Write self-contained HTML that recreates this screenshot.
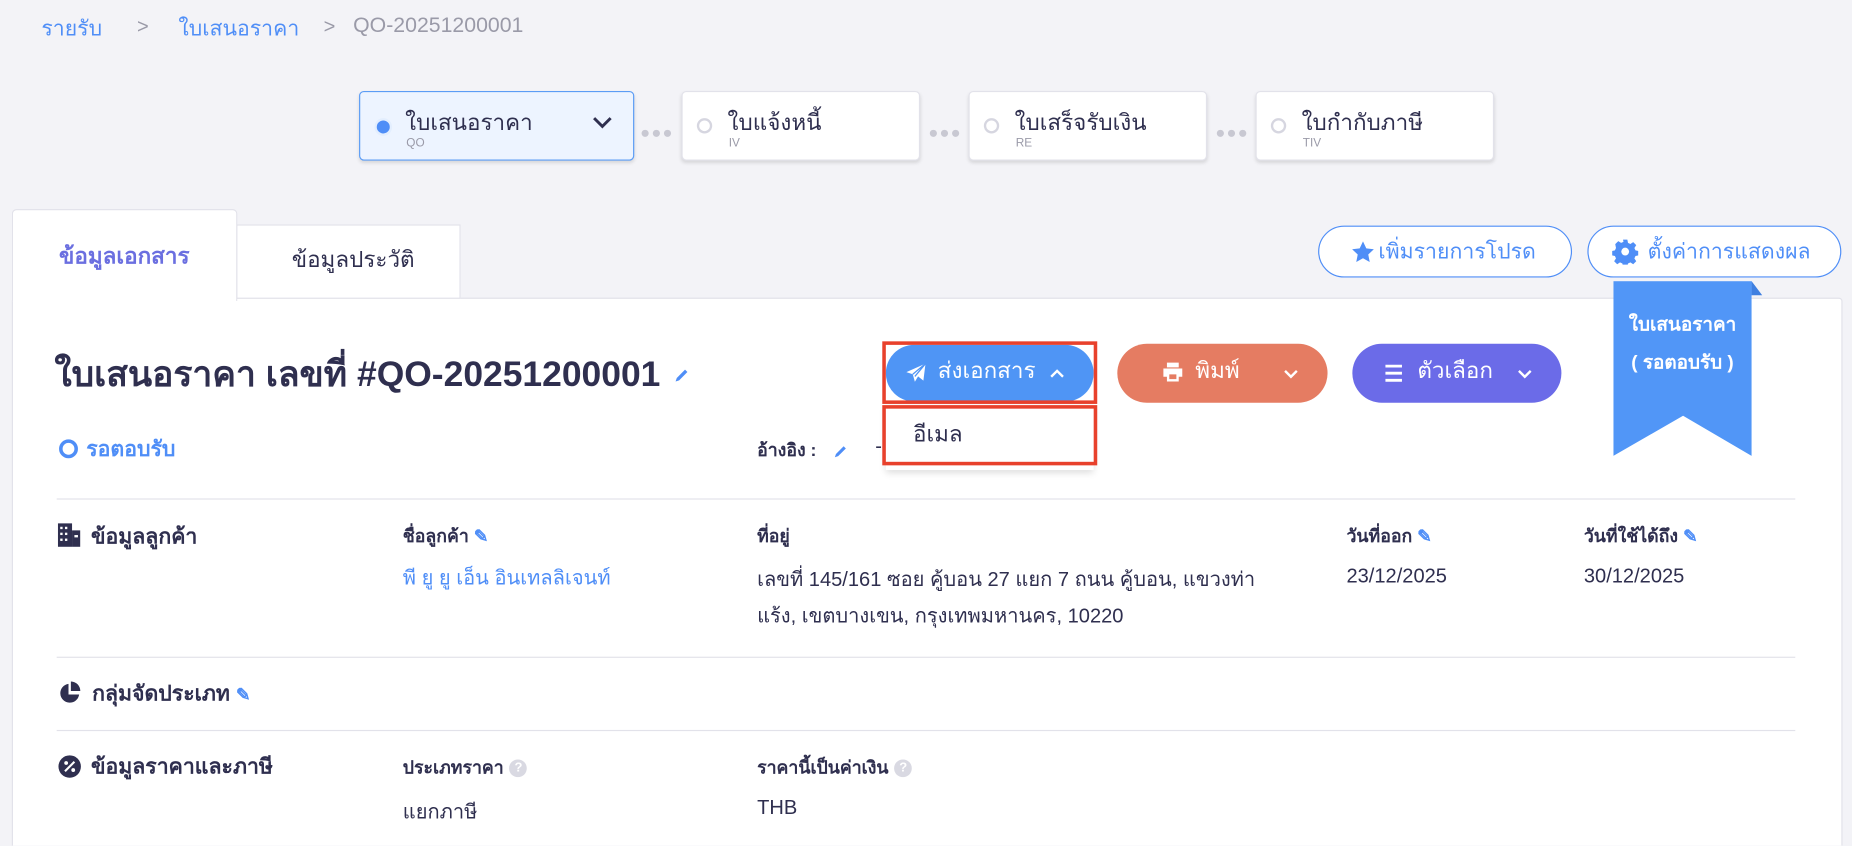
<!DOCTYPE html>
<html><head><meta charset="utf-8"><style>
html,body{margin:0;padding:0;width:1852px;height:846px;overflow:hidden;background:#f3f3f7}
#w{position:absolute;left:0;top:0;width:1568px;height:716px;overflow:hidden;transform:scale(1.1811);transform-origin:0 0;font-family:"Liberation Sans","Noto Sans CJK SC",sans-serif;color:#2f2f4f}
.a{position:absolute;white-space:nowrap}
.blue{color:#4f8ef7}
.card{position:absolute;top:77px;height:59px;background:#fff;border:1px solid #e2e2ea;border-radius:4px;box-shadow:0 2px 3px rgba(0,0,0,.12);box-sizing:border-box}
.card .t{position:absolute;left:38px;top:11px;font-size:19px;color:#2f2f4f}
.card .s{position:absolute;left:39px;top:38px;font-size:10px;color:#9a9aa8}
.card .c{position:absolute;left:12px;top:22px;width:9px;height:9px;border:2.5px solid #d6d6e0;border-radius:50%}
.dots{position:absolute;top:104px;font-size:14px;color:#c8c8d2;letter-spacing:1px}
.pill{position:absolute;border:1px solid #4f8ef7;border-radius:22px;background:#fff;color:#4f8ef7;font-size:18px;box-sizing:border-box;height:44px;line-height:42px;padding-left:50px}
.btn{position:absolute;top:291px;height:50px;border-radius:25px;color:#fff;font-size:19px;line-height:48px}
.lab{font-size:15px;font-weight:bold}
.val{font-size:17px}
.hr{position:absolute;left:48px;width:1472px;height:1px;background:#e2e2ea}
.q{display:inline-block;width:15px;height:15px;border-radius:50%;background:#d9d9e2;color:#fff;font-size:11px;line-height:15px;text-align:center;vertical-align:2px;margin-left:5px}
</style></head><body><div id="w">
<div class="a blue" style="left:35px;top:9px;font-size:18px">รายรับ</div>
<div class="a" style="left:116px;top:13px;font-size:17px;color:#9a9aa8">&gt;</div>
<div class="a blue" style="left:151px;top:9px;font-size:18px">ใบเสนอราคา</div>
<div class="a" style="left:274px;top:13px;font-size:17px;color:#9a9aa8">&gt;</div>
<div class="a" style="left:299px;top:11px;font-size:18px;color:#9a9aa8">QO-20251200001</div>

<div class="card" style="left:304px;width:233px;background:#edf4ff;border-color:#5b9cf5"><div class="c" style="background:#4f8ef7;border-color:#e3eefe;width:11px;height:11px;border-width:2px"></div><div class="t">ใบเสนอราคา</div><div class="s">QO</div>
<svg style="position:absolute;left:196px;top:20px" width="18" height="12" viewBox="0 0 18 12"><path d="M2 2l7 7 7-7" fill="none" stroke="#2f2f4f" stroke-width="2.5"/></svg></div>
<div class="dots" style="left:542px">●●●</div>
<div class="card" style="left:577px;width:202px"><div class="c"></div><div class="t">ใบแจ้งหนี้</div><div class="s">IV</div></div>
<div class="dots" style="left:786px">●●●</div>
<div class="card" style="left:820px;width:202px"><div class="c"></div><div class="t">ใบเสร็จรับเงิน</div><div class="s">RE</div></div>
<div class="dots" style="left:1029px">●●●</div>
<div class="card" style="left:1063px;width:202px"><div class="c"></div><div class="t">ใบกำกับภาษี</div><div class="s">TIV</div></div>

<div class="a" style="left:10px;top:252px;width:1548px;height:466px;background:#fff;border:1px solid #e2e2ea;border-radius:3px"></div>
<div class="a" style="left:200px;top:190px;width:190px;height:63px;background:#fff;border:1px solid #e2e2ea;box-sizing:border-box"></div>
<div class="a" style="left:10px;top:177px;width:191px;height:78px;background:#fff;border:1px solid #e2e2ea;border-bottom:none;border-radius:4px 4px 0 0;box-sizing:border-box"></div>
<div class="a" style="left:50px;top:202px;font-size:19px;font-weight:bold;color:#6b6fe0">ข้อมูลเอกสาร</div>
<div class="a" style="left:247px;top:205px;font-size:19px">ข้อมูลประวัติ</div>

<div class="pill" style="left:1116px;top:191px;width:215px"><svg style="position:absolute;left:26px;top:11px" width="22" height="21" viewBox="0 0 24 24"><path d="M12 1.5l3.2 6.8 7.3.9-5.4 5 1.4 7.3L12 17.9l-6.5 3.6 1.4-7.3-5.4-5 7.3-.9z" fill="#4f8ef7"/></svg>เพิ่มรายการโปรด</div>
<div class="pill" style="left:1344px;top:191px;width:215px"><svg style="position:absolute;left:20px;top:10px" width="22" height="22" viewBox="0 0 24 24"><path d="M10 1h4l.6 3 2.2 1 2.6-1.7 2.8 2.8-1.7 2.6 1 2.2 3 .6v4l-3 .6-1 2.2 1.7 2.6-2.8 2.8-2.6-1.7-2.2 1-.6 3h-4l-.6-3-2.2-1-2.6 1.7-2.8-2.8 1.7-2.6-1-2.2-3-.6v-4l3-.6 1-2.2L2.8 5.1l2.8-2.8 2.6 1.7 2.2-1z" fill="#4f8ef7"/><circle cx="12" cy="12" r="3.6" fill="#fff"/></svg>ตั้งค่าการแสดงผล</div>

<svg class="a" style="left:1366px;top:238px" width="127" height="150" viewBox="0 0 127 150"><path d="M117 0l9 12h-9z" fill="#3f7fe0"/><path d="M0 0h117v148l-58-34-59 34z" fill="#5196f7"/></svg>
<div class="a" style="left:1366px;top:260px;width:117px;text-align:center;color:#fff;font-weight:bold;font-size:16px;line-height:32px">ใบเสนอราคา<br>( รอตอบรับ )</div>

<div class="a" style="left:46px;top:294px;font-size:30px;font-weight:bold">ใบเสนอราคา เลขที่ #QO-20251200001</div>
<svg class="a" style="left:570px;top:311px" width="14" height="14" viewBox="0 0 14 14"><path d="M2 12l1-3 7-7 2 2-7 7z" fill="#4f8ef7"/></svg>

<div class="btn" style="left:750px;width:176px;background:#4f95f5;top:292px;height:48px;line-height:46px"><svg style="position:absolute;left:16px;top:15px" width="19" height="18" viewBox="0 0 20 20"><path d="M19 1L1 9l6 2 2 7 3-5 5 4z" fill="#fff"/><path d="M7 11L19 1 9 13" fill="none" stroke="#4f95f5" stroke-width="1.2"/></svg><span style="position:absolute;left:44px">ส่งเอกสาร</span><svg style="position:absolute;left:138px;top:19px" width="14" height="10" viewBox="0 0 14 10"><path d="M2 8l5-5 5 5" fill="none" stroke="#fff" stroke-width="2"/></svg></div>
<div class="a" style="left:747px;top:289px;width:176px;height:47px;border:3px solid #e8412c"></div>
<div class="a" style="left:750px;top:344px;width:176px;height:54px;background:#fff;box-shadow:0 2px 6px rgba(0,0,0,.15)"></div>
<div class="a" style="left:747px;top:343px;width:176px;height:45px;border:3px solid #e8412c"></div>
<div class="a" style="left:773px;top:353px;font-size:19px">อีเมล</div>

<div class="btn" style="left:946px;width:178px;background:#e57c62"><svg style="position:absolute;left:38px;top:15px" width="18" height="18" viewBox="0 0 18 18"><path d="M4 1h10v4H4zM1 6h16v7h-3v4H4v-4H1z" fill="#fff"/><path d="M6 11h6v4H6z" fill="#e57c62"/></svg><span style="position:absolute;left:66px">พิมพ์</span><svg style="position:absolute;left:140px;top:21px" width="14" height="10" viewBox="0 0 14 10"><path d="M2 2l5 5 5-5" fill="none" stroke="#fff" stroke-width="2"/></svg></div>
<div class="btn" style="left:1145px;width:177px;background:#6b6be8"><svg style="position:absolute;left:27px;top:17px" width="16" height="16" viewBox="0 0 16 16"><path d="M1 2h14M1 8h14M1 14h14" stroke="#fff" stroke-width="2.4"/></svg><span style="position:absolute;left:55px">ตัวเลือก</span><svg style="position:absolute;left:139px;top:21px" width="14" height="10" viewBox="0 0 14 10"><path d="M2 2l5 5 5-5" fill="none" stroke="#fff" stroke-width="2"/></svg></div>

<div class="a" style="left:50px;top:372px;width:10px;height:10px;border:3px solid #4f8ef7;border-radius:50%"></div>
<div class="a blue" style="left:73px;top:365px;font-size:18px;font-weight:bold">รอตอบรับ</div>
<div class="a lab" style="left:641px;top:369px">อ้างอิง :</div>
<svg class="a" style="left:705px;top:376px" width="13" height="13" viewBox="0 0 14 14"><path d="M2 12l1-3 7-7 2 2-7 7z" fill="#4f8ef7"/></svg>
<div class="a" style="left:741px;top:368px;font-size:17px">-</div>

<div class="hr" style="top:422px"></div>
<svg class="a" style="left:49px;top:443px" width="19" height="20" viewBox="0 0 19 20"><path d="M0 0h12v20H0z" fill="#2f2f4f"/><path d="M12 6h7v14h-7z" fill="#2f2f4f"/><g fill="#fff"><rect x="2" y="3" width="2" height="2"/><rect x="6" y="3" width="2" height="2"/><rect x="2" y="8" width="2" height="2"/><rect x="6" y="8" width="2" height="2"/><rect x="2" y="13" width="2" height="2"/><rect x="6" y="13" width="2" height="2"/><rect x="14" y="10" width="3" height="2"/></g></svg>
<div class="a" style="left:77px;top:439px;font-size:18px;font-weight:bold">ข้อมูลลูกค้า</div>
<div class="a lab" style="left:341px;top:442px">ชื่อลูกค้า <span class="blue">✎</span></div>
<div class="a val blue" style="left:341px;top:476px">พี ยู ยู เอ็น อินเทลลิเจนท์</div>
<div class="a lab" style="left:641px;top:442px">ที่อยู่</div>
<div class="a val" style="left:641px;top:475px;line-height:31px">เลขที่ 145/161 ซอย คู้บอน 27 แยก 7 ถนน คู้บอน, แขวงท่า<br>แร้ง, เขตบางเขน, กรุงเทพมหานคร, 10220</div>
<div class="a lab" style="left:1140px;top:442px">วันที่ออก <span class="blue">✎</span></div>
<div class="a val" style="left:1140px;top:478px">23/12/2025</div>
<div class="a lab" style="left:1341px;top:442px">วันที่ใช้ได้ถึง <span class="blue">✎</span></div>
<div class="a val" style="left:1341px;top:478px">30/12/2025</div>

<div class="hr" style="top:556px"></div>
<svg class="a" style="left:49px;top:577px" width="20" height="20" viewBox="0 0 20 20"><path d="M9 2a8 8 0 1 0 9 9H9z" fill="#2f2f4f"/><path d="M11 0a8 8 0 0 1 8 8h-8z" fill="#2f2f4f"/></svg>
<div class="a" style="left:78px;top:572px;font-size:18px;font-weight:bold">กลุ่มจัดประเภท <span class="blue" style="font-size:15px">✎</span></div>

<div class="hr" style="top:618px"></div>
<svg class="a" style="left:49px;top:639px" width="20" height="20" viewBox="0 0 20 20"><circle cx="10" cy="10" r="9.5" fill="#2f2f4f"/><path d="M6 14l8-8" stroke="#fff" stroke-width="1.8"/><circle cx="7" cy="7" r="1.6" fill="#fff"/><circle cx="13" cy="13" r="1.6" fill="#fff"/></svg>
<div class="a" style="left:77px;top:634px;font-size:18px;font-weight:bold">ข้อมูลราคาและภาษี</div>
<div class="a lab" style="left:341px;top:638px">ประเภทราคา<span class="q">?</span></div>
<div class="a val" style="left:341px;top:674px">แยกภาษี</div>
<div class="a lab" style="left:641px;top:638px">ราคานี้เป็นค่าเงิน<span class="q">?</span></div>
<div class="a val" style="left:641px;top:674px">THB</div>
</div></body></html>
